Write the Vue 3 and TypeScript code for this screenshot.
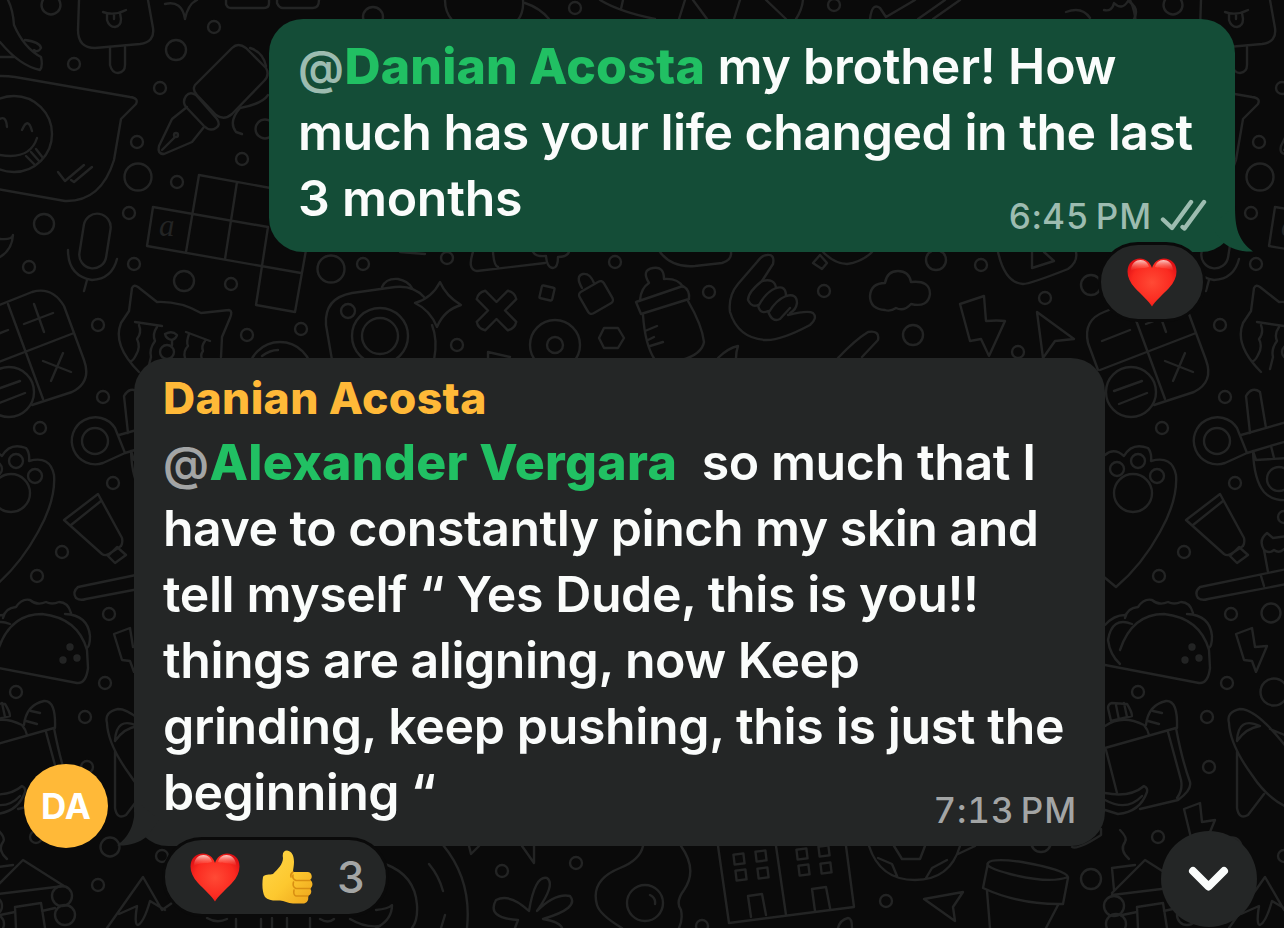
<template>
  <main class="chat">
    <!-- Doodle wallpaper -->
    <svg class="wallpaper" width="1284" height="928" viewBox="0 0 1284 928" aria-hidden="true">
      <defs>
        <g id="doodle-tile">
          <circle v-for="(dot, i) in tileDots" :key="i" :cx="dot[0]" :cy="dot[1]" :r="dot[2]" />
          <path v-for="(d, i) in tileDoodles" :key="`t${i}`" :d="d" />
          <rect x="81.500" y="213.500" width="27" height="55" rx="13.500" transform="rotate(9 95 241)" />
          <text x="159" y="236" class="crossword-letter">a</text>
          <g class="filled">
            <circle cx="70" cy="647" r="2.500" />
            <circle cx="77" cy="658" r="2.500" />
            <circle cx="63" cy="660" r="2.500" />
          </g>
        </g>
      </defs>
      <use href="#doodle-tile" />
      <use href="#doodle-tile" x="1122" />
      <circle v-for="(dot, i) in centerDots" :key="i" :cx="dot[0]" :cy="dot[1]" :r="dot[2]" />
      <path v-for="(d, i) in centerDoodles" :key="`c${i}`" :d="d" />
      <rect v-for="(w, i) in windows" :key="`w${i}`" :x="w[0] - 5" :y="w[1] - 5" width="10" height="10" :transform="`rotate(-7 ${w[0]} ${w[1]})`" />
      <rect x="540.500" y="286.500" width="13" height="13" rx="1.500" transform="rotate(13 547 293)" />
      <rect x="582" y="285" width="28" height="25" rx="4" transform="rotate(-30 596 297.500)" />
      <path
        d="M-6 -22 Q0 -26 6 -22 V-6 H22 Q26 0 22 6 H6 V22 Q0 26 -6 22 V6 H-22 Q-26 0 -22 -6 H-6 Z"
        transform="translate(496.500 310.500) rotate(45)"
      />
    </svg>

    <!-- Outgoing message -->
    <section class="row row-out">
      <div class="bubble bubble-out">
        <p v-for="(line, i) in outgoing" :key="i" class="line" :style="{ letterSpacing: `${line.spacing}px` }">
          <span v-for="(part, j) in line.parts" :key="j" :class="part.kind">{{ part.text }}</span>
        </p>
        <div class="meta meta-out">
          <time class="time time-out">6:45 PM</time>
          <svg class="ticks" width="48" height="34" viewBox="0 0 48 34">
            <path d="M3 20.500 L12 29 L31 3 M22.500 28 L24.500 29.500 L44 3" />
          </svg>
        </div>
        <svg class="tail tail-out" width="60" height="46" viewBox="0 0 60 46">
          <path d="M42 0 C42 22 45 34 60 45.500 C48 46 38 43 30 36.500 L18 20 Z" />
        </svg>
        <div class="reactions reactions-out">
          <svg class="emoji" width="50" height="50" viewBox="0 0 50 50">
            <use href="#heart" />
          </svg>
        </div>
      </div>
    </section>

    <!-- Incoming message -->
    <section class="row row-in">
      <div class="avatar">DA</div>
      <div class="bubble bubble-in">
        <h2 class="sender">Danian Acosta</h2>
        <p v-for="(line, i) in incoming" :key="i" class="line" :style="{ letterSpacing: `${line.spacing}px` }">
          <span v-for="(part, j) in line.parts" :key="j" :class="part.kind">{{ part.text }}</span>
        </p>
        <div class="meta">
          <time class="time">7:13 PM</time>
        </div>
        <svg class="tail tail-in" width="60" height="46" viewBox="0 0 60 46">
          <path d="M18 0 C18 22 15 34 0 45.500 C12 46 22 43 30 36.500 L42 20 Z" />
        </svg>
        <div class="reactions reactions-in">
          <svg class="emoji" width="50" height="50" viewBox="0 0 50 50">
            <defs>
              <radialGradient id="heartFill" cx="0.5" cy="0.5" r="0.62">
                <stop offset="0" stop-color="#ff4a35" />
                <stop offset="0.65" stop-color="#fb2a20" />
                <stop offset="1" stop-color="#d90b12" />
              </radialGradient>
              <linearGradient id="heartShine" x1="0" y1="0" x2="0" y2="1">
                <stop offset="0" stop-color="#ffe3dc" stop-opacity="0.9" />
                <stop offset="1" stop-color="#ff6a55" stop-opacity="0" />
              </linearGradient>
              <linearGradient id="thumbFill" x1="0" y1="0" x2="1" y2="1">
                <stop offset="0" stop-color="#ffd84a" />
                <stop offset="0.55" stop-color="#fdc82f" />
                <stop offset="1" stop-color="#eda41b" />
              </linearGradient>
              <g id="heart">
                <path
                  fill="url(#heartFill)"
                  d="M25 49.500 C22 44 14 37.500 8 31 C3 25.500 0.500 20 0.500 14.500 C0.500 6.500 6 1.500 13 1.500 C18.500 1.500 23 5 25 11 C27 5 31.500 1.500 37 1.500 C44 1.500 49.500 6.500 49.500 14.500 C49.500 20 47 25.500 42 31 C36 37.500 28 44 25 49.500 Z"
                />
                <path fill="url(#heartShine)" d="M4 12 C5 6 9 3 13.500 3 C18 3 21 6 22 10 C17 12 9 10 4 14 Z" />
                <path fill="url(#heartShine)" d="M46 12 C45 6 41 3 36.500 3 C32 3 29 6 28 10 C33 12 41 10 46 14 Z" />
              </g>
            </defs>
            <use href="#heart" />
          </svg>
          <svg class="emoji thumb" width="51" height="54" viewBox="0 0 51 54">
            <path
              fill="url(#thumbFill)"
              d="M1 27 C2 24 8 25 11 24 C16 19 21 14 21 8 C20 3 22 0.500 25 0.500 C30 1 32 6 32 12 C32 16 31 19 31 22 L46 22 C50 22.500 51 28 48 30 C51.500 32 51 37 48 38.500 C50.500 41 49 45 46 46 C47 50 45 53.500 41 53.500 L31 53.500 C26 53.500 22 50.500 18 50.500 C11 51 6 50 3 47 C0 42 0 33 1 27 Z"
            />
            <path class="fold" d="M48 30.500 H34 Q30 29 31 25 M48 38.500 H34 Q30 37 31.500 32 M46 46 H34 Q31 45 32 40 M31 22 Q28 24 29 27" />
          </svg>
          <span class="count">3</span>
        </div>
      </div>
    </section>

    <button class="scroll-down" type="button" aria-label="Scroll to latest">
      <svg width="42" height="28" viewBox="0 0 42 28">
        <path d="M5 6 L20.500 21.500 L36 6" />
      </svg>
    </button>
  </main>
</template>

<script setup lang="ts">
interface Part {
  text: string
  kind?: 'at' | 'mention'
}

interface Line {
  parts: Part[]
  spacing: number
}

type Dot = [number, number, number]

const outgoing: Line[] = [
  {
    spacing: -0.2,
    parts: [{ text: '@', kind: 'at' }, { text: 'Danian Acosta', kind: 'mention' }, { text: ' my brother! How' }]
  },
  { spacing: -0.49, parts: [{ text: 'much has your life changed in the last' }] },
  { spacing: -0.25, parts: [{ text: '3 months' }] }
]

const incoming: Line[] = [
  {
    spacing: -0.4,
    parts: [{ text: '@', kind: 'at' }, { text: 'Alexander Vergara', kind: 'mention' }, { text: '  so much that I' }]
  },
  { spacing: -0.5, parts: [{ text: 'have to constantly pinch my skin and' }] },
  { spacing: -0.41, parts: [{ text: 'tell myself “ Yes Dude, this is you!!' }] },
  { spacing: -0.49, parts: [{ text: 'things are aligning, now Keep' }] },
  { spacing: -0.36, parts: [{ text: 'grinding, keep pushing, this is just the' }] },
  { spacing: -0.6, parts: [{ text: 'beginning “' }] }
]

// The wallpaper repeats horizontally, so the left edge is drawn once and reused
const tileDots: Dot[] = [
  [51, 5, 9.5], [214, 27, 6], [176, 50, 10], [74, 64, 6], [160, 88, 6], [137, 142, 6], [138, 177, 13.5],
  [242, 159, 6], [177, 182, 6], [129, 213, 6], [44, 224, 10], [29, 267, 6], [134, 264, 6], [184, 281, 10],
  [231, 284, 6], [98, 325, 6], [265, 129, 9.5], [14, 134, 38], [9, 392, 25], [167, 352, 7], [247, 335, 6],
  [103, 397, 6], [40, 428, 6], [113, 483, 6], [62, 552, 6], [37, 576, 6], [109, 614, 6], [95, 441, 13],
  [157, 479, 12], [162, 517, 6], [11, 493, 19], [-5, 469, 7], [16, 461, 7], [35, 476, 7], [149, 613, 9.5],
  [16, 692, 6], [105, 683, 6], [85, 717, 6], [87, 767, 6], [36, 837, 6], [152, 692, 13.5], [162, 856, 6],
  [110, 847, 9.5], [98, 885, 6], [62, 896, 10], [65, 915, 10], [-8, 906, 10], [-6, 924, 10], [176, 135, 2]
]

const tileDoodles: string[] = [
  // popsicle
  'M79 0 L78 30 Q78 48 95 48 L140 44 Q155 42 153 28 L148 0',
  'M103 12 Q114 16 126 10 M107 14 v6 q2 7 8 7 q6 -1 6 -8 l-1 -6 M114 15 v4',
  'M110 47 v18 q2 8 8 8 q7 -1 7 -8 v-18',
  'M8 0 Q13 10 14 25 Q24 48 41 57 Q43 66 40 70 Q20 66 0 42 M0 57 H14 M25 40 Q40 42 41 48 Q38 53 34 50',
  'M165 4 Q182 0 185 19 Q188 4 197 0',
  // fountain pen
  'M195 85 L232 48 Q238 42 246 48 L266 68 Q270 75 264 81 L232 114 Q224 121 216 115 L197 95 Q192 90 195 85 Z',
  'M186 96 q4 -5 10 -1 L217 119 q4 6 -1 9 q-6 4 -12 -2 L186 107 q-4 -5 0 -11 Z',
  'M187 107 L172 119 L159 146 Q157 154 164 154 L192 142 L204 127 M162 150 L175 137',
  'M250 48 Q263 52 266 66 M268 95 Q262 104 240 108 Q228 122 236 132 L242 134',
  // speech bubble with a smiley
  'M-30 80 Q-5 74 15 77 L130 97 Q139 98 136 104 L121 119 L114 160 Q101 202 65 201 L-20 186',
  'M-3 121 q9 -8 10 6 M22 130 q6 -14 10 1 M0 155 Q30 160 37 138',
  'M26 156 l9 9 m-4 -13 l8 9 m-3 -12 l7 9 M58 172 l7 9 l19 -16 M71 180 l3 2 l18 -15',
  'M68 250 Q68 276 92 280 Q112 279 117 259 M87 280 l-3 11',
  // crossword
  'M153 207 L268 227 M147 246 L301 273 M199 175 L276 189 M153 207 L147 246 M199 175 L186 252 M237 182 L225 259 M268 227 L256 305 L295 312 L306 250',
  'M0 239 Q12 240 13 235 Q12 250 0 257',
  // calculator
  'M-24 370 L-34 343 Q-39 320 -18 312 L32 292 Q52 286 64 306 L84 360 Q92 382 72 392 L32 405',
  'M8 304 L43 399 M-22 370 L74 333 M24 324 L53 313 M34 304 L44 332 M43 361 l28 11 M63 353 l-12 28 M-20 341 l28 -11',
  'M-8 391 l28 -10 M-3 404 l28 -11',
  // crying cat
  'M139 372 Q112 345 121 323 L129 311 L132 288 Q134 284 138 287 L157 302 Q180 301 201 313 L229 310 Q233 311 230 318 L222 337 L221 357',
  'M135 322 L162 326 M139 325 q3 8 -2 14 q4 8 -1 16 q-3 6 -5 6 M157 327 q-5 7 -2 14 q-6 8 -4 16 q-2 8 -3 12',
  'M186 332 L210 341 M189 334 q-3 8 -1 12 q-5 5 -3 12 M205 341 q-4 5 -2 10 q-3 4 -1 8 M165 334 q7 -4 12 1 q-1 4 -5 5 q-6 -1 -7 -6 M172 340 v5',
  // whistle
  'M125 453 L103 463 A23.500 23.500 0 1 1 115 428 Z M119 435 L165 422 M125 453 L165 441 M128 433 L124 396 Q130 386 138 392 L144 428',
  'M131 451 L134 460 L165 458 M131 451 Q132 480 142 492 Q150 501 165 500 M149 446 l3 12',
  // paw
  'M-17 455 Q-8 447 2 456 Q10 442 26 448 Q30 453 29 461 Q50 455 54 475 Q56 500 38 532 Q20 565 -6 587 L-30 567',
  'M98 494 L64 520 L102 554 Q106 557 112 552 L121 546 Q123 543 122 538 Z M101 501 L71 525 M108 556 L117 547 L126 555 L115 563 Z',
  'M165 569 L78 587 Q72 592 76 598 Q80 601 86 599 L165 584 M139 576 l3 10 M146 572 L142 550 Q136 540 145 533 L151 538 L165 536 M142 550 q5 4 10 0 q5 4 10 -1',
  // taco
  'M-2 650 Q10 614 42 614 Q78 618 87 650 L88 668 Q86 684 77 683 L-17 665',
  'M3 618 Q5 608 16 607 Q22 598 30 600 Q37 606 46 602 Q52 605 59 602 Q68 602 71 613 M65 614 Q88 615 90 636 Q90 646 87 648 M-17 625 Q-8 615 3 615 M10 624 Q-10 616 -14 640 Q-12 655 -2 664',
  'M114 634 L130 628 L133 647 L145 646 L134 672 L130 661 L122 660 Z',
  // grocery bag
  'M-17 748 L54 728 Q60 760 68 782 Q70 790 56 800 L18 809 M46 732 L59 780 Q61 790 55 798 M-16 750 L-5 793 M-17 726 Q0 714 22 725 Q26 730 27 735',
  'M-14 708 q0 -4 4 -5 L5 704 q5 8 5 12 L-11 721 Z M-6 705 l3 15 M2 703 l3 14 M24 725 Q26 705 44 701 Q56 700 55 728 M31 711 l9 2 M26 721 l11 3',
  'M-17 793 Q8 798 22 786 Q26 788 25 792 Q18 812 -4 814 L-17 810 M-17 800 Q5 812 20 796',
  'M-2 830 q8 8 5 12 q-6 8 4 17',
  // cabin
  'M-10 893 L23 860 L64 886 L-10 895 M-8 890 L-10 868 L13 865 M16 928 L15 907 L41 903 L45 928 M0 915 L15 912 M42 911 L55 908',
  'M107 723 Q104 712 118 709 Q135 709 165 748 M107 723 Q108 745 130 775 Q145 798 165 807 M115 741 Q116 716 138 726 Q124 728 115 741 M148 729 L165 736 M115 752 V808 Q117 820 126 815 L142 794',
  'M107 928 L143 877 L162 910 L172 903 M119 914 L137 906 Q134 925 138 925 Q144 922 150 901 L165 910',
  'M69 838 L62 809 L78 803 L80 822 L93 820 L88 832'
]

const centerDots: Dot[] = [
  [331, 269, 13.5], [363, 264, 6], [447, 258, 6], [615, 262, 6], [301, 329, 6], [457, 345, 6], [380, 336, 28],
  [380, 336, 18], [348, 311, 7], [555, 345, 25], [555, 345, 8], [280, 374, 32], [709, 292, 6], [824, 291, 6],
  [936, 260, 10], [981, 265, 6], [913, 335, 10], [1045, 298, 6], [1018, 352, 6], [1091, 285, 10], [373, 17, 10],
  [575, 8, 6], [834, 5, 6], [502, 871, 6], [576, 863, 6], [645, 903, 18], [702, 926, 6], [886, 901, 6],
  [1041, 842, 10], [1091, 879, 10]
]

const centerDoodles: string[] = [
  // camera
  'M332 360 L326 325 Q324 298 352 293 L395 287 Q413 285 424 297 M432 325 Q438 340 434 360 M382 287 Q386 278 398 279 Q408 281 412 288',
  'M440 282 Q446 296 461 305 Q444 310 437 327 Q430 310 415 303 Q432 298 440 282 Z',
  'M262 356 q8 -6 16 -6 M488 358 v-6 l22 5',
  'M582 288 q-7 -12 1 -14 q7 -1 11 9 M604 328 h14 l6 10 l-6 10 h-14 l-5 -10 Z',
  // baby bottle
  'M640 300 Q641 288 649 283 Q641 270 653 268 Q664 266 664 279 Q678 278 683 287 M636 302 L683 286 Q690 290 689 299 L641 314 Z',
  'M643 315 Q645 345 655 360 M688 301 Q702 325 704 342 Q702 354 682 360 M645 331 l12 -5 M648 340 l6 -3 M650 346 l13 -4',
  'M473 252 Q467 270 477 271 L545 263 M493 252 Q494 266 498 267 M533 252 Q536 257 546 256 Q547 268 553 268 Q558 268 558 257 Q567 257 569 252 M400 252 l25 2',
  'M660 252 Q672 268 695 266 L722 263 Q732 260 731 252',
  // shaka
  'M762 281 L773 264 Q775 254 767 255 Q762 255 757 262 L738 284 Q728 296 730 312 Q738 338 765 340 Q780 341 810 325 Q818 318 813 313 Q808 310 788 315',
  'M762 281 Q748 292 748 300 Q752 308 758 305 Q760 315 768 311 Q772 323 780 319 L790 308 M762 281 Q775 278 776 288 Q786 285 786 296 Q797 293 797 303 Q796 310 790 313 M776 288 Q766 292 759 305 M786 296 Q776 300 769 312',
  'M885 310 Q870 309 870 296 Q871 283 885 283 Q887 271 898 271 Q909 271 911 282 Q930 280 930 294 Q928 308 911 304 Q904 312 896 308 Q890 312 885 310 Z',
  'M813 263 L822 269 L827 263 L820 255 Z M823 252 Q835 264 847 264 Q862 262 872 252',
  'M838 358 Q855 340 868 332 Q880 330 878 340 L862 357 M718 358 Q728 348 738 346 Q736 352 736 358',
  'M998 252 Q1005 283 1023 284 Q1030 284 1068 269 Q1078 262 1076 252 M1032 252 V268 L1054 261 L1044 252',
  'M960 304 L984 296 L986 321 Q998 320 1005 321 L989 356 L981 339 L970 341 Z',
  'M1037 312 L1074 339 L1055 341 L1043 358 Z',
  // strip above the first message
  'M226 0 v4 q1 4 5 4 h33 q5 0 5 -5 v-3 M277 0 v3 q2 5 6 5 h30 q6 0 6 -8',
  'M445 0 Q445 12 452 20 M523 0 Q524 12 518 20 M525 3 Q540 8 549 19 M600 0 Q620 12 655 19 M623 0 l-2 9 M685 0 l-6 19 M693 0 l14 19 M740 0 l-6 19',
  'M766 0 l20 19 M803 0 Q802 10 796 19 M870 19 Q872 2 880 8 L886 17 L915 0 M918 19 L945 0 M933 19 L960 0 M1066 12 Q1082 6 1090 18 M1104 10 q8 2 10 -7 q8 8 14 -2 Q1140 8 1134 19',
  // bottom strip
  'M385 864 Q415 875 417 905 Q418 920 412 928 M443 845 Q472 880 467 928 M429 864 q10 12 14 27 M445 915 l-4 13 M376 910 Q388 909 392 905 Q392 920 376 928',
  'M469 846 l2 8 l8 -8 M522 846 L534 863 V846',
  'M529 911 Q535 875 547 878 Q556 884 537 911 Q555 893 570 896 Q580 908 543 919 Q560 922 562 928 M529 911 Q510 893 496 900 Q486 918 518 920 L515 928',
  'M643 846 Q640 860 620 868 Q590 880 597 905 Q600 915 622 928 M681 846 Q698 870 684 890 Q675 902 681 910 Q683 920 679 928 M650 895 q6 3 5 9',
  'M718 846 L729 923 L854 907 L846 846 M776 846 L786 915 M751 917 l-3 -21 l14 -2 l4 21 M815 911 l-3 -22 l14 -2 l4 21',
  'M869 846 Q880 880 915 880 Q950 880 960 846 M894 846 l8 13 h18 l5 -13 M878 858 l14 6 l5 12 M926 878 l6 -10 l15 -8 M958 854 l17 -8',
  'M924 899 L963 892 L953 907 L955 921 Z',
  'M988 863 Q992 858 1022 862 Q1066 870 1068 877 Q1050 884 1010 874 Q984 867 988 863 L983 888 Q1020 905 1063 904 L1068 878 M987 891 L990 928 M1058 905 L1046 928',
  'M1072 847 Q1078 850 1101 835 v-6 M838 928 q2 -8 10 -10 q4 0 4 10',
  'M207 918 q10 6 20 1 M236 919 v9 M261 919 v9 M272 918 v10 M287 918 v10 M310 918 v10 M320 919 q8 5 14 0 M350 919 Q365 928 380 926'
]

const windows: [number, number][] = [
  [739, 859], [761, 856], [741, 875], [763, 873], [802, 854], [824, 851], [804, 870], [826, 868]
]
</script>

<style>
body {
  background: #0a0a0a;
}
</style>

<style scoped>
.chat {
  position: relative;
  box-sizing: border-box;
  width: 1284px;
  height: 928px;
  padding-top: 19px;
  overflow: hidden;
  background: #0a0a0a;
  font-family: Inter, 'Liberation Sans', sans-serif;
}

.wallpaper {
  position: absolute;
  inset: 0;
  fill: none;
  stroke: #232424;
  stroke-width: 2.4;
  stroke-linecap: round;
  stroke-linejoin: round;
}

.crossword-letter {
  fill: #232424;
  stroke: none;
  font: italic 31px 'Liberation Serif', serif;
}

.filled {
  fill: #232424;
}

.row {
  position: relative;
  display: flex;
  align-items: flex-end;
}

.row-out {
  justify-content: flex-end;
  padding-right: 49px;
}

.row-in {
  gap: 26px;
  margin-top: 106px;
  padding-left: 24px;
}

.bubble {
  position: relative;
  box-sizing: border-box;
  border-radius: 34px;
}

.bubble-out {
  width: 966px;
  height: 233px;
  padding: 14px 29px 0;
  background: #144d37;
}

.bubble-in {
  width: 971px;
  height: 488px;
  padding: 10px 29px 0;
  background: #242626;
}

.line {
  margin: 0;
  color: #fafcfb;
  font-size: 50px;
  font-weight: 600;
  line-height: 66px;
  white-space: pre;
}

.at {
  color: #a3a5a5;
  font-size: 46px;
  line-height: 1;
  letter-spacing: 0.5px;
}

.bubble-out .at {
  color: #9dbcb0;
}

.mention {
  color: #21c063;
  font-weight: 800;
  letter-spacing: 0.15px;
}

.bubble-in .mention {
  letter-spacing: 0.34px;
}

.sender {
  margin: 0 0 1px;
  color: #ffb938;
  font-size: 44.5px;
  font-weight: 800;
  line-height: 60px;
  letter-spacing: 0.35px;
}

.meta {
  position: absolute;
  right: 28px;
  bottom: 18px;
  display: flex;
  align-items: center;
  gap: 8px;
}

.meta-out {
  right: 27px;
}

.time {
  color: #a3a5a5;
  font-size: 35px;
  font-weight: 550;
  font-variant-numeric: tabular-nums;
  line-height: 36px;
  letter-spacing: 0.9px;
  word-spacing: -4px;
}

.time-out {
  color: #9dbcb0;
}

.ticks {
  fill: none;
  stroke: #9dbcb0;
  stroke-width: 4.4;
  stroke-linecap: round;
  stroke-linejoin: round;
}

.tail {
  position: absolute;
  bottom: 0;
}

.tail-out {
  right: -18px;
  fill: #144d37;
}

.tail-in {
  left: -17px;
  fill: #242626;
}

.reactions {
  position: absolute;
  display: flex;
  align-items: center;
  box-sizing: border-box;
  height: 80px;
  border: 3px solid #0a0a0a;
  border-radius: 40px;
  background: #242626;
}

.reactions-out {
  right: 29px;
  bottom: -70px;
  width: 108px;
  justify-content: center;
}

.reactions-in {
  left: 28px;
  bottom: -71px;
  width: 227px;
  padding-left: 25px;
}

.emoji {
  flex: none;
}

.thumb {
  margin-left: 22px;
}

.fold {
  fill: none;
  stroke: #d98f12;
  stroke-width: 1.6;
  stroke-linecap: round;
}

.count {
  margin-left: 24px;
  color: #a3a5a5;
  font-size: 44px;
  font-weight: 500;
}

.avatar {
  display: flex;
  align-items: center;
  justify-content: center;
  width: 84px;
  height: 84px;
  margin-bottom: -2px;
  border-radius: 50%;
  background: #ffb938;
  color: #fff;
  font-size: 35px;
  font-weight: 700;
}

.scroll-down {
  position: absolute;
  right: 27px;
  bottom: 1px;
  display: flex;
  align-items: center;
  justify-content: center;
  width: 96px;
  height: 96px;
  padding: 0;
  border: none;
  border-radius: 50%;
  background: #242626;
}

.scroll-down path {
  fill: none;
  stroke: #fafcfb;
  stroke-width: 8;
  stroke-linecap: round;
  stroke-linejoin: round;
}
</style>
